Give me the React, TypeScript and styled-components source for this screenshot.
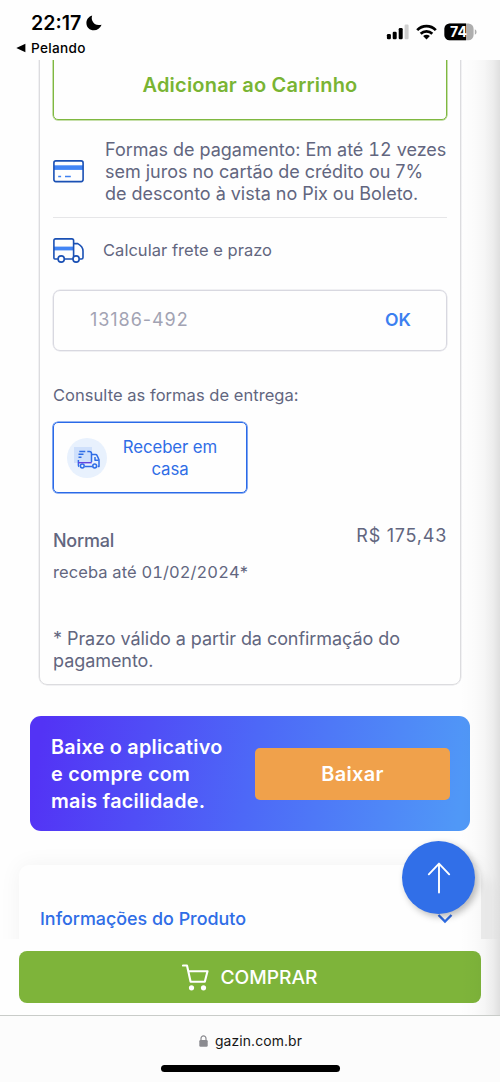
import React from "react";
import styled, { createGlobalStyle } from "styled-components";

const Global = createGlobalStyle`
  *, *::before, *::after { box-sizing: border-box; }
  html, body { margin: 0; padding: 0; background: #fefefe; }
  body { font-family: Inter, "Liberation Sans", sans-serif; color: #62667f; }
  button { font-family: inherit; margin: 0; padding: 0; border: 0; background: none; }
  svg { display: block; flex: none; }
`;

const Screen = styled.div`
  position: relative;
  width: 500px;
  height: 1082px;
  display: flex;
  flex-direction: column;
  overflow: hidden;
  background: #fefefe;
`;

const StatusBar = styled.header`
  height: 60px;
  flex: none;
  display: flex;
  justify-content: space-between;
  padding: 11px 23px 0 16px;
  color: #000;
`;

const Clock = styled.div`
  display: flex;
  align-items: center;
  gap: 5px;
  height: 24px;
  padding-left: 15px;
  font-size: 19.6px;
  font-weight: 600;
`;

const BackLink = styled.div`
  display: flex;
  align-items: center;
  gap: 5px;
  height: 20px;
  margin-top: 3px;
  font-size: 13.6px;
  font-weight: 500;
  letter-spacing: 0.3px;
`;

const Indicators = styled.div`
  display: flex;
  align-items: center;
  height: 20px;
  margin-top: 11px;
  gap: 7px;
`;

const Viewport = styled.main`
  height: 879px;
  flex: none;
  overflow: hidden;
`;

const ProductCard = styled.section`
  height: 645px;
  margin: -20px 39px 0;
  padding: 0 13px;
  border: 1px solid #dcdcdf;
  border-radius: 8px;
  box-shadow: 0 0 0 0.5px #e4e4e7;
`;

const Digits = styled.span`
  font-variant-numeric: tabular-nums;
`;

const AddButton = styled.button`
  display: block;
  width: 394px;
  height: 72px;
  margin: 7px 0 0;
  padding-top: 2px;
  border: 1px solid #7fb840;
  border-radius: 5px;
  box-shadow: 0 0 0 0.5px #8fc158;
  color: #79b433;
  font-size: 20px;
  font-weight: 600;
  letter-spacing: 0.2px;
`;

const PaymentRow = styled.div`
  display: flex;
  align-items: center;
  gap: 21px;
  height: 98px;
  padding-top: 6px;
  border-bottom: 1px solid #e6e6e8;
`;

const PaymentText = styled.div`
  margin: 1px -10px 0 0;
  font-size: 18px;
  line-height: 22px;
  letter-spacing: -0.02px;
  white-space: nowrap;
`;

const FreightRow = styled.div`
  display: flex;
  align-items: center;
  gap: 19px;
  height: 65px;
  font-size: 16.5px;
  letter-spacing: 0.03px;
`;

const FreightLabel = styled.span`
  margin-top: -2px;
`;

const ZipField = styled.div`
  display: flex;
  align-items: center;
  justify-content: space-between;
  width: 394px;
  height: 61px;
  margin-top: 7px;
  padding: 0 35px 3px 36px;
  border: 1px solid #d8d8e0;
  border-radius: 7px;
  box-shadow: 0 0 0 0.5px #e2e2e8;
  color: #a2a3b3;
  font-size: 18px;
  letter-spacing: 0.95px;
`;

const OkButton = styled.button`
  color: #3b7ff0;
  font-size: 17.6px;
  font-weight: 600;
  letter-spacing: 0;
`;

const DeliveryLabel = styled.p`
  margin: 33px 0 16px;
  font-size: 16.5px;
  line-height: 22px;
  letter-spacing: 0.04px;
`;

const DeliveryOption = styled.button`
  display: flex;
  align-items: center;
  gap: 13px;
  width: 194px;
  height: 71px;
  padding: 0 26px 0 13px;
  border: 1px solid #2a6ae8;
  border-radius: 5px;
  box-shadow: 0 0 0 0.6px #2a6ae8;
  color: #2f6de6;
  font-size: 16.8px;
  line-height: 22px;
  letter-spacing: -0.1px;
`;

const OptionText = styled.span`
  flex: 1;
  text-align: center;
`;

const IconDisc = styled.span`
  display: flex;
  align-items: center;
  justify-content: center;
  flex: none;
  width: 40px;
  height: 40px;
  padding-top: 2px;
  border-radius: 50%;
  background: #e8f1fd;
`;

const Quote = styled.div`
  display: flex;
  justify-content: space-between;
  margin-top: 32px;
`;

const QuoteName = styled.div`
  padding-top: 5px;
  font-size: 18px;
  font-weight: 500;
  line-height: 22px;
  letter-spacing: -0.25px;
`;

const QuoteDate = styled.div`
  margin-top: 10px;
  font-size: 16.5px;
  font-weight: 400;
  line-height: 20px;
  letter-spacing: 0.08px;
`;

const Price = styled.div`
  font-size: 18px;
  line-height: 22px;
  letter-spacing: 0.75px;
`;

const Note = styled.p`
  margin: 46px 0 0;
  font-size: 18px;
  line-height: 22px;
  letter-spacing: -0.06px;
  white-space: pre-line;
`;

const AppBanner = styled.section`
  display: flex;
  align-items: center;
  justify-content: space-between;
  height: 115px;
  margin: 31px 30px 0;
  padding: 0 20px 0 21px;
  border-radius: 11px;
  background: linear-gradient(100deg, #5333f5 3%, #4d68f7 50%, #5098f7 97%);
`;

const BannerText = styled.p`
  margin: 2px 0 0;
  color: #fff;
  font-size: 19.8px;
  font-weight: 600;
  line-height: 27px;
  letter-spacing: 0.27px;
  white-space: pre-line;
`;

const DownloadButton = styled.button`
  width: 195px;
  height: 52px;
  border-radius: 5px;
  background: #f0a14b;
  color: #fff;
  font-size: 20px;
  font-weight: 600;
  letter-spacing: 0.3px;
`;

const InfoPanel = styled.section`
  display: flex;
  align-items: center;
  justify-content: space-between;
  height: 106px;
  margin: 34px 19px 0 19px;
  padding: 0 28px 0 21px;
  border-radius: 10px;
  background: #fefefe;
  box-shadow: 0 0 22px rgba(0, 0, 0, 0.05), 12px 12px 12px rgba(0, 0, 0, 0.04);
  color: #2f6de6;
  font-size: 17.9px;
  font-weight: 500;
`;

const BuyArea = styled.div`
  height: 76px;
  flex: none;
  padding: 12px 19px 0;
  background: #fefefe;
`;

const BuyButton = styled.button`
  display: flex;
  align-items: center;
  justify-content: center;
  gap: 11px;
  width: 462px;
  height: 52px;
  border-radius: 8px;
  background: #7eb43a;
  color: #fff;
  font-size: 19.2px;
  font-weight: 500;
`;

const BrowserBar = styled.footer`
  display: flex;
  flex-direction: column;
  align-items: center;
  height: 67px;
  flex: none;
  border-top: 1px solid #c9ccc9;
  background: #fcfcfc;
`;

const Address = styled.div`
  display: flex;
  align-items: center;
  gap: 7px;
  height: 20px;
  margin-top: 15px;
  padding-left: 1px;
  color: #161616;
  font-size: 13.9px;
  letter-spacing: 0.12px;
`;

const HomeIndicator = styled.div`
  width: 179px;
  height: 7px;
  margin-top: 14px;
  border-radius: 4px;
  background: #000;
`;

const EdgeShade = styled.div`
  position: absolute;
  top: 60px;
  right: 0;
  width: 40px;
  height: 955px;
  pointer-events: none;
  background: linear-gradient(
    90deg,
    rgba(0, 0, 0, 0) 0%,
    rgba(0, 0, 0, 0.012) 35%,
    rgba(0, 0, 0, 0.03) 60%,
    rgba(0, 0, 0, 0.065) 82%,
    rgba(0, 0, 0, 0.12) 100%
  );
`;

const TopButton = styled.button`
  position: absolute;
  left: 402px;
  top: 841px;
  display: flex;
  align-items: center;
  justify-content: center;
  width: 73px;
  height: 73px;
  padding-top: 1px;
  border-radius: 50%;
  background: #316fe8;
  box-shadow: 3px 3px 7px rgba(0, 0, 0, 0.28);
`;

const MoonIcon = () => (
  <svg width="16" height="16" viewBox="0 0 16 16">
    <path d="M6.2.5C5.6 2 5.5 3.8 6.3 5.8 7.7 9.3 11 10.8 15.6 9.7 14.3 13.2 11.3 15.3 7.9 15.3 3.7 15.3.4 12 .4 7.9.4 4.5 2.8 1.5 6.2.5Z" fill="#000" />
  </svg>
);

const BackIcon = () => (
  <svg width="10" height="10" viewBox="0 0 10 10">
    <path d="M.3 5 9.4.7v8.6Z" fill="#000" />
  </svg>
);

const SignalIcon = () => (
  <svg width="23" height="16" viewBox="0 0 23 16">
    <rect x="0.9" y="10" width="4" height="5.3" rx="1.2" fill="#000" />
    <rect x="6.7" y="7.7" width="4" height="7.6" rx="1.2" fill="#000" />
    <rect x="12.7" y="4" width="4" height="11.3" rx="1.2" fill="#000" />
    <rect x="18.6" y="0.6" width="4" height="14.7" rx="1.2" fill="#cfcfcf" />
  </svg>
);

const WifiIcon = () => (
  <svg width="21" height="16" viewBox="0 0 21 16" fill="none" stroke="#000" strokeWidth="2.7">
    <path d="M1.2 6.1C6.3.7 14.7.7 19.8 6.1" />
    <path d="M4.7 9.7C8 6.5 13 6.5 16.3 9.7" />
    <path d="M7.1 12.1Q10.5 9.4 13.9 12.1L10.5 15.6Z" fill="#000" stroke="none" />
  </svg>
);

const BatteryIcon = () => (
  <svg width="33" height="18" viewBox="0 0 33 18">
    <defs>
      <clipPath id="cell">
        <rect x="0.4" y="0.6" width="29.2" height="16.6" rx="5.2" />
      </clipPath>
    </defs>
    <g clipPath="url(#cell)">
      <rect width="30" height="18" fill="#aeaeae" />
      <rect width="22" height="18" fill="#000" />
    </g>
    <path d="M30.8 6.2Q32.6 7 32.6 9T30.8 11.8Z" fill="#aeaeae" />
    <text x="14.6" y="14" textAnchor="middle" fontFamily="Inter, sans-serif" fontSize="14.2" fontWeight="700" fill="#fff">74</text>
  </svg>
);

const CardIcon = () => (
  <svg width="31" height="23" viewBox="0 0 31 23" fill="none">
    <rect x="1" y="5.3" width="29" height="4.6" fill="#4285f5" />
    <rect x="0.9" y="0.9" width="29.2" height="20.7" rx="2" stroke="#1a50b4" strokeWidth="1.6" />
    <path d="M5.2 16.4h2.9M12 16.4h5.8" stroke="#3f80f0" strokeWidth="1.5" />
  </svg>
);

const TruckIcon = () => (
  <svg width="31" height="25" viewBox="0 0 31 25" fill="none">
    <rect x="1" y="8.6" width="20" height="3.8" fill="#4285f5" />
    <g stroke="#1a50b4" strokeWidth="1.6" strokeLinejoin="round">
      <path d="M4.9 21H1.8a.9.9 0 0 1-.9-.9V2.6Q.9.9 2.6.9h16.3q1.7 0 1.7 1.7V21H11.4M20.6 5.6h4.2Q30 8.4 30 13v6.5Q30 21 28.5 21H26.6" />
      <circle cx="8.2" cy="21" r="3.1" fill="#fff" />
      <circle cx="23.1" cy="21" r="3.1" fill="#fff" />
    </g>
  </svg>
);

const DeliveryIcon = () => (
  <svg width="28" height="24" viewBox="0 0 28 24" fill="none">
    <rect x="1" y="0" width="18" height="16" fill="#cfe0fb" />
    <g stroke="#2f6de6" strokeWidth="1.5" strokeLinejoin="round">
      <path d="M6.3 4.4h6M14.3 4.4h2q2.2 0 2.2 2v8.6M5.5 7.3h5M5.5 10.2h3" />
      <path d="M18.5 7.4h4.1q1 0 1.4 1l2 4.4v6.7h-1.3M6.2 19.5q-.8-.4-.8-1.3V13M12 19.5h7.5" />
      <path d="M22 10v3.2h3.6" />
      <circle cx="9.3" cy="19" r="1.9" />
      <circle cx="21.7" cy="19" r="1.9" />
    </g>
    <path d="M5 15.7h13.7" stroke="#6344e0" strokeWidth="1.4" />
  </svg>
);

const ChevronIcon = () => (
  <svg width="16" height="11" viewBox="0 0 16 11" fill="none">
    <path d="m1.5 2 6.5 6.5L14.5 2" stroke="#2f6de6" strokeWidth="2.4" />
  </svg>
);

const ArrowUpIcon = () => (
  <svg width="24" height="32" viewBox="0 0 24 32" fill="none" stroke="#fff" strokeWidth="1.9" strokeLinecap="round" strokeLinejoin="round">
    <path d="M12 30.5V1.7M1.8 12.3 12 1.7l10.2 10.6" />
  </svg>
);

const CartIcon = () => (
  <svg width="27" height="27" viewBox="0 0 27 27" fill="none">
    <path d="M1 1.5h4l3.6 16.2h14.2L25.5 7.2H6.4" stroke="#fff" strokeWidth="2.1" strokeLinejoin="round" strokeLinecap="round" />
    <circle cx="9.5" cy="23.8" r="2.6" fill="#fff" />
    <circle cx="21.5" cy="23.8" r="2.6" fill="#fff" />
  </svg>
);

const LockIcon = () => (
  <svg width="9" height="12" viewBox="0 0 9 12">
    <path d="M2 5.5V3.4a2.5 2.5 0 0 1 5 0v2.1" fill="none" stroke="#8b8b90" strokeWidth="1.2" />
    <rect x="0.3" y="5" width="8.4" height="6.7" rx="1.2" fill="#8b8b90" />
  </svg>
);

export default function App() {
  return (
    <Screen>
      <Global />
      <StatusBar>
        <div>
          <Clock>22:17<MoonIcon /></Clock>
          <BackLink><BackIcon />Pelando</BackLink>
        </div>
        <Indicators>
          <SignalIcon />
          <WifiIcon />
          <BatteryIcon />
        </Indicators>
      </StatusBar>
      <Viewport>
        <ProductCard>
          <AddButton>Adicionar ao Carrinho</AddButton>
          <PaymentRow>
            <CardIcon />
            <PaymentText>
              <div>Formas de pagamento: Em até <Digits>12</Digits> vezes</div>
              <div>sem juros no cartão de crédito ou 7%</div>
              <div>de desconto à vista no Pix ou Boleto.</div>
            </PaymentText>
          </PaymentRow>
          <FreightRow>
            <TruckIcon />
            <FreightLabel>Calcular frete e prazo</FreightLabel>
          </FreightRow>
          <ZipField>
            13186-492
            <OkButton>OK</OkButton>
          </ZipField>
          <DeliveryLabel>Consulte as formas de entrega:</DeliveryLabel>
          <DeliveryOption>
            <IconDisc><DeliveryIcon /></IconDisc>
            <OptionText>Receber em casa</OptionText>
          </DeliveryOption>
          <Quote>
            <QuoteName>
              Normal
              <QuoteDate>receba até <Digits>01/02/2024</Digits>*</QuoteDate>
            </QuoteName>
            <Price>R$ 175,43</Price>
          </Quote>
          <Note>{"* Prazo válido a partir da confirmação do\npagamento."}</Note>
        </ProductCard>
        <AppBanner>
          <BannerText>{"Baixe o aplicativo\ne compre com\nmais facilidade."}</BannerText>
          <DownloadButton>Baixar</DownloadButton>
        </AppBanner>
        <InfoPanel>
          Informações do Produto
          <ChevronIcon />
        </InfoPanel>
      </Viewport>
      <BuyArea>
        <BuyButton><CartIcon />COMPRAR</BuyButton>
      </BuyArea>
      <BrowserBar>
        <Address><LockIcon />gazin.com.br</Address>
        <HomeIndicator />
      </BrowserBar>
      <EdgeShade />
      <TopButton aria-label="Voltar ao topo"><ArrowUpIcon /></TopButton>
    </Screen>
  );
}
